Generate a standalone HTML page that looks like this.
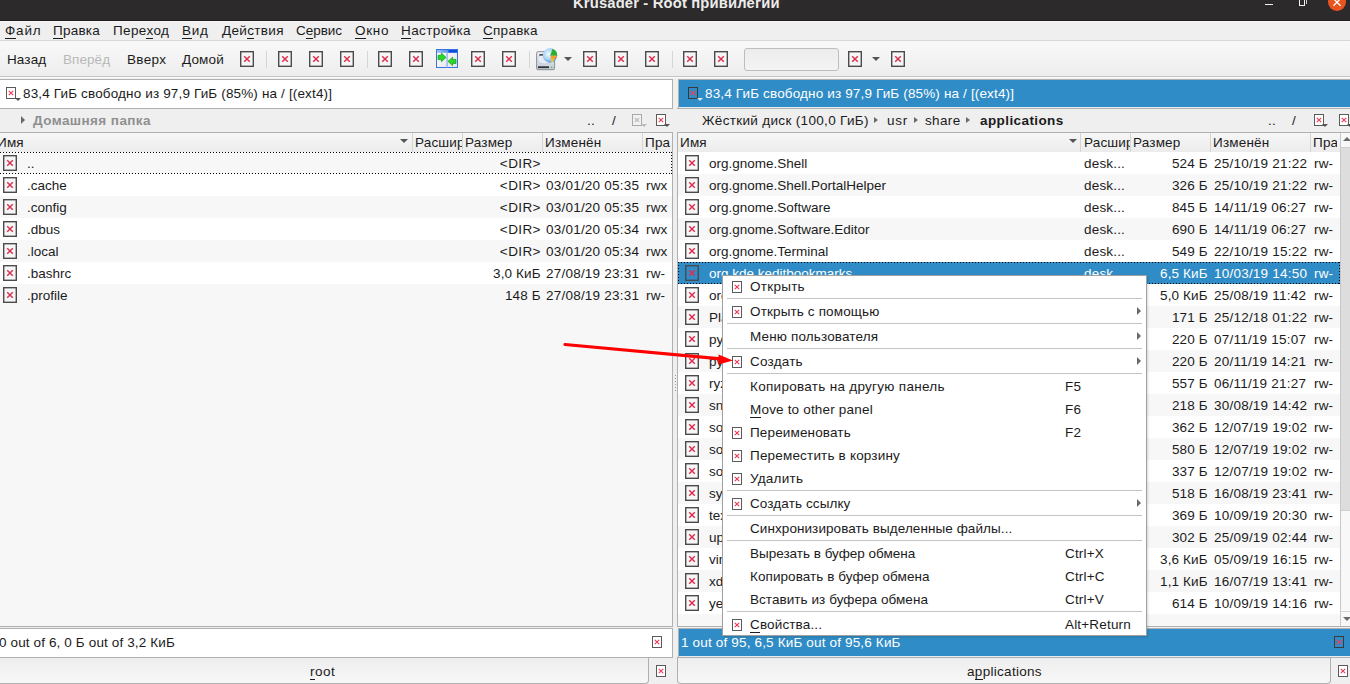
<!DOCTYPE html><html><head><meta charset="utf-8"><style>
*{margin:0;padding:0;box-sizing:border-box}
html,body{width:1350px;height:684px;overflow:hidden;background:#efefef}
body{position:relative;font-family:"Liberation Sans",sans-serif;font-size:13.5px;color:#1b1b1b;letter-spacing:0.18px}
.a{position:absolute}
.t{position:absolute;white-space:nowrap;line-height:16px}
u{text-decoration:none;border-bottom:1px solid currentColor}
svg.i{position:absolute;overflow:visible}
.wt{color:#fff}
</style></head><body>
<svg width="0" height="0" style="position:absolute"><defs>
<symbol id="bx" viewBox="0 0 14 16"><rect x="0.7" y="0.7" width="12.6" height="14.6" fill="#f6f6f6" stroke="#4b4b4b" stroke-width="1.4"/><path d="M4.2 5.2L9.8 10.8M9.8 5.2L4.2 10.8" stroke="#dc3050" stroke-width="1.5"/></symbol>
<symbol id="bxs" viewBox="0 0 14 16"><rect x="0.7" y="0.7" width="12.6" height="14.6" fill="#308cc6" stroke="#4b4b4b" stroke-width="1.4"/><path d="M4.2 5.2L9.8 10.8M9.8 5.2L4.2 10.8" stroke="#dc3050" stroke-width="1.5"/></symbol>
<symbol id="sx" viewBox="0 0 10 12"><rect x="0.5" y="0.5" width="9" height="11" fill="#fff" stroke="#5a5a5a" stroke-width="1"/><path d="M2.8 3.8L7.2 8.2M7.2 3.8L2.8 8.2" stroke="#ef3d5a" stroke-width="1.2"/></symbol>
<symbol id="sxb" viewBox="0 0 10 12"><rect x="0.5" y="0.5" width="9" height="11" fill="#308cc6" stroke="#3a3a3a" stroke-width="1"/><path d="M2.8 3.8L7.2 8.2M7.2 3.8L2.8 8.2" stroke="#ef3d5a" stroke-width="1.2"/></symbol>
<symbol id="sxg" viewBox="0 0 10 12"><rect x="0.5" y="0.5" width="9" height="11" fill="#f2f2f2" stroke="#a8a8a8" stroke-width="1"/><path d="M2.8 3.8L7.2 8.2M7.2 3.8L2.8 8.2" stroke="#b8b8b8" stroke-width="1.2"/></symbol>
</defs></svg>
<div class="a" style="left:0px;top:0px;width:1350px;height:21px;background:#2c2a2a;"></div>
<div class="a" style="left:0px;top:21px;width:1350px;height:1px;background:#f7f7f7;"></div>
<div class="t" style="left:573px;top:-5px;color:#ececec;font-weight:bold;font-size:14.8px;letter-spacing:0.144px">Krusader - Root привилегий</div>
<div class="a" style="left:0px;top:20px;width:1350px;height:1px;background:#1c1c1c;"></div>
<div class="a" style="left:1265px;top:4px;width:8px;height:1.2px;background:#f0f0f0;"></div>
<div class="a" style="left:1299px;top:-2px;width:6px;height:8px;border:1.2px solid #f0f0f0"></div>
<div class="a" style="left:1306px;top:0px;width:1px;height:4px;background:#cfcfcf;"></div>
<div class="a" style="left:1327.8px;top:-7.2px;width:18.5px;height:18.5px;border-radius:50%;background:#e95420"></div>
<svg class="i" style="left:0;top:0" width="1350" height="21"><path d="M1333.4 -1.4L1340.6 5.8M1340.6 -1.4L1333.4 5.8" stroke="#fff" stroke-width="1.3"/></svg>
<div class="t" style="left:5px;top:23px;;letter-spacing:0.8px"><u>Ф</u>айл</div>
<div class="t" style="left:53px;top:23px;;letter-spacing:0.24px"><u>П</u>равка</div>
<div class="t" style="left:113px;top:23px;;letter-spacing:0.383px">Пере<u>х</u>од</div>
<div class="t" style="left:182px;top:23px;;letter-spacing:0.7px"><u>В</u>ид</div>
<div class="t" style="left:222px;top:23px;;letter-spacing:0.343px">Дей<u>с</u>твия</div>
<div class="t" style="left:296px;top:23px;;letter-spacing:-0.04px">С<u>е</u>рвис</div>
<div class="t" style="left:355px;top:23px;;letter-spacing:0.733px"><u>О</u>кно</div>
<div class="t" style="left:401px;top:23px;;letter-spacing:0.388px"><u>Н</u>астройка</div>
<div class="t" style="left:483px;top:23px;;letter-spacing:0.267px"><u>С</u>правка</div>
<div class="a" style="left:0px;top:40px;width:1350px;height:1px;background:#d8d8d8;"></div>
<div class="a" style="left:0px;top:41px;width:1350px;height:35px;background:linear-gradient(#f9f9f9,#ededed);"></div>
<div class="a" style="left:0px;top:76px;width:1350px;height:1px;background:#c4c4c4;"></div>
<div class="a" style="left:0px;top:77px;width:1350px;height:1px;background:#fbfbfb;"></div>
<div class="t" style="left:7px;top:52px;;letter-spacing:0.125px">Назад</div>
<div class="t" style="left:63px;top:52px;color:#b8b8b8;letter-spacing:0.06px">Вперёд</div>
<div class="t" style="left:127px;top:52px;;letter-spacing:0.325px">Вверх</div>
<div class="t" style="left:182px;top:52px;;letter-spacing:0.15px">Домой</div>
<svg class="i" style="left:240px;top:51px" width="14" height="16"><use href="#bx"/></svg>
<svg class="i" style="left:278px;top:51px" width="14" height="16"><use href="#bx"/></svg>
<svg class="i" style="left:309px;top:51px" width="14" height="16"><use href="#bx"/></svg>
<svg class="i" style="left:340px;top:51px" width="14" height="16"><use href="#bx"/></svg>
<svg class="i" style="left:378px;top:51px" width="14" height="16"><use href="#bx"/></svg>
<svg class="i" style="left:409px;top:51px" width="14" height="16"><use href="#bx"/></svg>
<svg class="i" style="left:471px;top:51px" width="14" height="16"><use href="#bx"/></svg>
<svg class="i" style="left:502px;top:51px" width="14" height="16"><use href="#bx"/></svg>
<svg class="i" style="left:583px;top:51px" width="14" height="16"><use href="#bx"/></svg>
<svg class="i" style="left:614px;top:51px" width="14" height="16"><use href="#bx"/></svg>
<svg class="i" style="left:645px;top:51px" width="14" height="16"><use href="#bx"/></svg>
<svg class="i" style="left:683px;top:51px" width="14" height="16"><use href="#bx"/></svg>
<svg class="i" style="left:714px;top:51px" width="14" height="16"><use href="#bx"/></svg>
<svg class="i" style="left:848px;top:51px" width="14" height="16"><use href="#bx"/></svg>
<svg class="i" style="left:891px;top:51px" width="14" height="16"><use href="#bx"/></svg>
<div class="a" style="left:266px;top:51px;width:1px;height:17px;background:#d6d6d6;"></div>
<div class="a" style="left:367px;top:51px;width:1px;height:17px;background:#d6d6d6;"></div>
<div class="a" style="left:529px;top:51px;width:1px;height:17px;background:#d6d6d6;"></div>
<div class="a" style="left:672px;top:51px;width:1px;height:17px;background:#d6d6d6;"></div>
<svg class="i" style="left:436px;top:49px" width="22" height="19" viewBox="0 0 22 19">
<defs><linearGradient id="tb" x1="0" y1="0" x2="1" y2="0"><stop offset="0" stop-color="#9cc0f4"/><stop offset="0.55" stop-color="#5a90e8"/><stop offset="0.6" stop-color="#0a4ee0"/><stop offset="1" stop-color="#0a4ee0"/></linearGradient>
<linearGradient id="rp" x1="0" y1="0" x2="1" y2="1"><stop offset="0" stop-color="#ffffff"/><stop offset="1" stop-color="#e4e4ea"/></linearGradient></defs>
<rect x="0.5" y="0.5" width="21" height="18" fill="url(#rp)" stroke="#3674e0"/>
<rect x="1" y="1" width="20" height="2.8" fill="url(#tb)"/>
<rect x="10.4" y="3.5" width="1.4" height="15" fill="#8fb6ea"/>
<path d="M2 6.2H5.4V4L10 8.4L5.4 12.8V10.6H2Z" fill="#28d828" stroke="#0c9c0c" stroke-width="0.7"/>
<path d="M20 10.4H16.6V8.2L12 12.4L16.6 16.6V14.4H20Z" fill="#28d828" stroke="#0c9c0c" stroke-width="0.7"/>
</svg>
<svg class="i" style="left:532px;top:44px" width="32" height="28" viewBox="0 0 32 28">
<defs><linearGradient id="dg" x1="0" y1="0" x2="0" y2="1"><stop offset="0" stop-color="#eef2f7"/><stop offset="1" stop-color="#c3ccd8"/></linearGradient>
<radialGradient id="gg" cx="0.4" cy="0.4" r="0.65"><stop offset="0" stop-color="#f4faff"/><stop offset="0.55" stop-color="#a8d4f6"/><stop offset="1" stop-color="#4a90d8"/></radialGradient></defs>
<rect x="4.6" y="7.7" width="18" height="18" rx="1.5" fill="url(#dg)" stroke="#80858c" stroke-width="0.9"/>
<ellipse cx="12.5" cy="15" rx="7" ry="5" fill="#e6ecf2" stroke="#b8c2cc" stroke-width="0.6"/>
<rect x="7.3" y="10.2" width="3.8" height="1.4" fill="#2e2e2e"/>
<rect x="6" y="22.3" width="11" height="1.8" fill="#303030"/>
<circle cx="19.7" cy="23.3" r="0.8" fill="#3cb83c"/>
<circle cx="18" cy="11.5" r="7.2" fill="url(#gg)"/>
<path d="M18.2 11.8L20.6 4.7A7.2 7.2 0 0 1 25.2 11.8Z" fill="#2cb02c"/>
<path d="M18.6 11.8H25.6L19.6 18.4Z" fill="#f4a028"/>
<path d="M19 15.5L22.5 15.2L19.6 18.4Z" fill="#f8d030"/>
</svg>
<div class="a" style="left:564px;top:57px;width:0;height:0;border-left:4px solid transparent;border-right:4px solid transparent;border-top:4px solid #555"></div>
<div class="a" style="left:872px;top:57px;width:0;height:0;border-left:4px solid transparent;border-right:4px solid transparent;border-top:4px solid #555"></div>
<div class="a" style="left:744px;top:48px;width:95px;height:23px;border:1px solid #bdbdbd;border-radius:3px;background:linear-gradient(#ececec,#f4f4f4)"></div>
<div class="a" style="left:672px;top:78px;width:6px;height:606px;background:#efefef;"></div>
<div class="a" style="left:-1px;top:79px;width:674px;height:30px;background:#fff;border:1px solid #b0b0b0"></div>
<div class="a" style="left:678px;top:79px;width:673px;height:30px;background:#308cc6;border:1px solid #b0b0b0;border-right:none;box-shadow:inset 0 -1px 0 #e6eef4"></div>
<div class="a" style="left:677px;top:108px;width:673px;height:1px;background:#b0b0b0;"></div>
<svg class="i" style="left:6px;top:87px" width="10" height="12"><use href="#sx"/></svg>
<div class="a" style="left:15px;top:98px;width:0;height:0;border-left:3px solid transparent;border-right:3px solid transparent;border-top:3px solid #555"></div>
<div class="t" style="left:23px;top:86px;letter-spacing:0.15px">83,4 ГиБ свободно из 97,9 ГиБ (85%) на / [(ext4)]</div>
<svg class="i" style="left:688px;top:87px" width="10" height="12"><use href="#sxb"/></svg>
<div class="a" style="left:697px;top:98px;width:0;height:0;border-left:3px solid transparent;border-right:3px solid transparent;border-top:3px solid #d0e4f4"></div>
<div class="t" style="left:705px;top:86px;color:#fff;letter-spacing:0.15px">83,4 ГиБ свободно из 97,9 ГиБ (85%) на / [(ext4)]</div>
<div class="a" style="left:21px;top:116px;width:0;height:0;border-top:4px solid transparent;border-bottom:4px solid transparent;border-left:4px solid #6a6a6a"></div>
<div class="t" style="left:33px;top:113px;font-weight:bold;color:#8f8f8f;letter-spacing:0.415px">Домашняя папка</div>
<div class="t" style="left:587px;top:113px;">..</div>
<div class="t" style="left:612px;top:113px;">/</div>
<svg class="i" style="left:632px;top:114px" width="10" height="12"><use href="#sxg"/></svg>
<div class="a" style="left:641px;top:124px;width:0;height:0;border-left:3px solid transparent;border-right:3px solid transparent;border-top:3px solid #bbb"></div>
<svg class="i" style="left:656px;top:114px" width="10" height="12"><use href="#sx"/></svg>
<div class="a" style="left:664px;top:124px;width:0;height:0;border-left:3px solid transparent;border-right:3px solid transparent;border-top:3px solid #555"></div>
<div class="t" style="left:702px;top:113px;;letter-spacing:0.33px">Жёсткий диск (100,0 ГиБ)</div>
<div class="a" style="left:874px;top:117px;width:0;height:0;border-top:3.5px solid transparent;border-bottom:3.5px solid transparent;border-left:4px solid #6a6a6a"></div>
<div class="a" style="left:914px;top:117px;width:0;height:0;border-top:3.5px solid transparent;border-bottom:3.5px solid transparent;border-left:4px solid #6a6a6a"></div>
<div class="a" style="left:966px;top:117px;width:0;height:0;border-top:3.5px solid transparent;border-bottom:3.5px solid transparent;border-left:4px solid #6a6a6a"></div>
<div class="t" style="left:887px;top:113px;;letter-spacing:0.7px">usr</div>
<div class="t" style="left:925px;top:113px;;letter-spacing:0.35px">share</div>
<div class="t" style="left:980px;top:113px;font-weight:bold;letter-spacing:0.409px">applications</div>
<div class="t" style="left:1268px;top:113px;">..</div>
<div class="t" style="left:1292px;top:113px;">/</div>
<svg class="i" style="left:1314px;top:114px" width="10" height="12"><use href="#sx"/></svg>
<div class="a" style="left:1322px;top:124px;width:0;height:0;border-left:3px solid transparent;border-right:3px solid transparent;border-top:3px solid #555"></div>
<svg class="i" style="left:1339px;top:114px" width="10" height="12"><use href="#sx"/></svg>
<div class="a" style="left:1347px;top:124px;width:0;height:0;border-left:3px solid transparent;border-right:3px solid transparent;border-top:3px solid #555"></div>
<div class="a" style="left:-1px;top:132px;width:674px;height:495px;background:#f7f7f7;border:1px solid #b0b0b0;border-bottom:1px solid #b0b0b0"></div>
<div class="a" style="left:-1px;top:132px;width:673px;height:20px;background:linear-gradient(#f6f6f6,#ececec);border-top:1px solid #b0b0b0"></div>
<div class="t" style="left:-3px;top:135px;width:40px;overflow:hidden">Имя</div>
<div class="a" style="left:412px;top:133px;width:1px;height:19px;background:#d4d4d4;"></div>
<div class="t" style="left:415px;top:135px;width:47px;overflow:hidden">Расшир</div>
<div class="a" style="left:462px;top:133px;width:1px;height:19px;background:#d4d4d4;"></div>
<div class="t" style="left:465px;top:135px;width:77px;overflow:hidden">Размер</div>
<div class="a" style="left:542px;top:133px;width:1px;height:19px;background:#d4d4d4;"></div>
<div class="t" style="left:545px;top:135px;width:97px;overflow:hidden">Изменён</div>
<div class="a" style="left:642px;top:133px;width:1px;height:19px;background:#d4d4d4;"></div>
<div class="t" style="left:645px;top:135px;width:26px;overflow:hidden">Пра</div>
<div class="a" style="left:400px;top:139px;width:0;height:0;border-left:4px solid transparent;border-right:4px solid transparent;border-top:4px solid #555"></div>
<div class="a" style="left:0px;top:152px;width:672px;height:22px;background:#f7f7f7;"></div>
<svg class="i" style="left:3px;top:155px" width="14" height="16"><use href="#bx"/></svg>
<div class="t" style="left:27px;top:156px;letter-spacing:0">..</div>
<div class="t" style="left:400px;top:156px;width:140.9px;text-align:right;letter-spacing:0.4px">&lt;DIR&gt;</div>
<div class="t" style="left:546px;top:156px;letter-spacing:0.22px"></div>
<div class="t" style="left:646px;top:156px;"></div>
<div class="a" style="left:0px;top:174px;width:672px;height:22px;background:#fff;"></div>
<svg class="i" style="left:3px;top:177px" width="14" height="16"><use href="#bx"/></svg>
<div class="t" style="left:27px;top:178px;letter-spacing:0">.cache</div>
<div class="t" style="left:400px;top:178px;width:140.9px;text-align:right;letter-spacing:0.4px">&lt;DIR&gt;</div>
<div class="t" style="left:546px;top:178px;letter-spacing:0.22px">03/01/20 05:35</div>
<div class="t" style="left:646px;top:178px;">rwx</div>
<div class="a" style="left:0px;top:196px;width:672px;height:22px;background:#f7f7f7;"></div>
<svg class="i" style="left:3px;top:199px" width="14" height="16"><use href="#bx"/></svg>
<div class="t" style="left:27px;top:200px;letter-spacing:0">.config</div>
<div class="t" style="left:400px;top:200px;width:140.9px;text-align:right;letter-spacing:0.4px">&lt;DIR&gt;</div>
<div class="t" style="left:546px;top:200px;letter-spacing:0.22px">03/01/20 05:35</div>
<div class="t" style="left:646px;top:200px;">rwx</div>
<div class="a" style="left:0px;top:218px;width:672px;height:22px;background:#fff;"></div>
<svg class="i" style="left:3px;top:221px" width="14" height="16"><use href="#bx"/></svg>
<div class="t" style="left:27px;top:222px;letter-spacing:0">.dbus</div>
<div class="t" style="left:400px;top:222px;width:140.9px;text-align:right;letter-spacing:0.4px">&lt;DIR&gt;</div>
<div class="t" style="left:546px;top:222px;letter-spacing:0.22px">03/01/20 05:34</div>
<div class="t" style="left:646px;top:222px;">rwx</div>
<div class="a" style="left:0px;top:240px;width:672px;height:22px;background:#f7f7f7;"></div>
<svg class="i" style="left:3px;top:243px" width="14" height="16"><use href="#bx"/></svg>
<div class="t" style="left:27px;top:244px;letter-spacing:0">.local</div>
<div class="t" style="left:400px;top:244px;width:140.9px;text-align:right;letter-spacing:0.4px">&lt;DIR&gt;</div>
<div class="t" style="left:546px;top:244px;letter-spacing:0.22px">03/01/20 05:34</div>
<div class="t" style="left:646px;top:244px;">rwx</div>
<div class="a" style="left:0px;top:262px;width:672px;height:22px;background:#fff;"></div>
<svg class="i" style="left:3px;top:265px" width="14" height="16"><use href="#bx"/></svg>
<div class="t" style="left:27px;top:266px;letter-spacing:0">.bashrc</div>
<div class="t" style="left:400px;top:266px;width:140.6px;text-align:right;letter-spacing:0.1px">3,0 КиБ</div>
<div class="t" style="left:546px;top:266px;letter-spacing:0.22px">27/08/19 23:31</div>
<div class="t" style="left:646px;top:266px;">rw-</div>
<div class="a" style="left:0px;top:284px;width:672px;height:22px;background:#f7f7f7;"></div>
<svg class="i" style="left:3px;top:287px" width="14" height="16"><use href="#bx"/></svg>
<div class="t" style="left:27px;top:288px;letter-spacing:0">.profile</div>
<div class="t" style="left:400px;top:288px;width:140.6px;text-align:right;letter-spacing:0.1px">148 Б</div>
<div class="t" style="left:546px;top:288px;letter-spacing:0.22px">27/08/19 23:31</div>
<div class="t" style="left:646px;top:288px;">rw-</div>
<div class="a" style="left:0px;top:152px;width:672px;height:1px;background:repeating-linear-gradient(90deg,#000 0 1px,transparent 1px 3px)"></div>
<div class="a" style="left:0px;top:173px;width:672px;height:1px;background:repeating-linear-gradient(90deg,#000 0 1px,transparent 1px 3px)"></div>
<div class="a" style="left:671px;top:152px;width:1px;height:22px;background:repeating-linear-gradient(180deg,#000 0 1px,transparent 1px 3px)"></div>
<div class="a" style="left:677px;top:132px;width:674px;height:495px;background:#fff;border:1px solid #b0b0b0"></div>
<div class="a" style="left:678px;top:132px;width:662px;height:20px;background:linear-gradient(#f6f6f6,#ececec);border-top:1px solid #b0b0b0"></div>
<div class="t" style="left:680px;top:135px;width:40px;overflow:hidden">Имя</div>
<div class="a" style="left:1080px;top:133px;width:1px;height:19px;background:#d4d4d4;"></div>
<div class="t" style="left:1084px;top:135px;width:46px;overflow:hidden">Расшир</div>
<div class="a" style="left:1130px;top:133px;width:1px;height:19px;background:#d4d4d4;"></div>
<div class="t" style="left:1133px;top:135px;width:77px;overflow:hidden">Размер</div>
<div class="a" style="left:1210px;top:133px;width:1px;height:19px;background:#d4d4d4;"></div>
<div class="t" style="left:1213px;top:135px;width:97px;overflow:hidden">Изменён</div>
<div class="a" style="left:1310px;top:133px;width:1px;height:19px;background:#d4d4d4;"></div>
<div class="t" style="left:1313px;top:135px;width:24px;overflow:hidden">Пра</div>
<div class="a" style="left:1069px;top:139px;width:0;height:0;border-left:4px solid transparent;border-right:4px solid transparent;border-top:4px solid #555"></div>
<div class="a" style="left:678px;top:152px;width:662px;height:474px;background:#fff;"></div>
<div class="a" style="left:678px;top:152px;width:662px;height:22px;background:#fff;"></div>
<svg class="i" style="left:685px;top:155px" width="14" height="16"><use href="#bx"/></svg>
<div class="t" style="left:709px;top:156px;letter-spacing:0">org.gnome.Shell</div>
<div class="t" style="left:1084px;top:156px;">desk...</div>
<div class="t" style="left:1100px;top:156px;width:107.6px;text-align:right;letter-spacing:0.1px">524 Б</div>
<div class="t" style="left:1214px;top:156px;letter-spacing:0.22px">25/10/19 21:22</div>
<div class="t" style="left:1314px;top:156px;">rw-</div>
<div class="a" style="left:678px;top:174px;width:662px;height:22px;background:#f7f7f7;"></div>
<svg class="i" style="left:685px;top:177px" width="14" height="16"><use href="#bx"/></svg>
<div class="t" style="left:709px;top:178px;letter-spacing:0">org.gnome.Shell.PortalHelper</div>
<div class="t" style="left:1084px;top:178px;">desk...</div>
<div class="t" style="left:1100px;top:178px;width:107.6px;text-align:right;letter-spacing:0.1px">326 Б</div>
<div class="t" style="left:1214px;top:178px;letter-spacing:0.22px">25/10/19 21:22</div>
<div class="t" style="left:1314px;top:178px;">rw-</div>
<div class="a" style="left:678px;top:196px;width:662px;height:22px;background:#fff;"></div>
<svg class="i" style="left:685px;top:199px" width="14" height="16"><use href="#bx"/></svg>
<div class="t" style="left:709px;top:200px;letter-spacing:0">org.gnome.Software</div>
<div class="t" style="left:1084px;top:200px;">desk...</div>
<div class="t" style="left:1100px;top:200px;width:107.6px;text-align:right;letter-spacing:0.1px">845 Б</div>
<div class="t" style="left:1214px;top:200px;letter-spacing:0.22px">14/11/19 06:27</div>
<div class="t" style="left:1314px;top:200px;">rw-</div>
<div class="a" style="left:678px;top:218px;width:662px;height:22px;background:#f7f7f7;"></div>
<svg class="i" style="left:685px;top:221px" width="14" height="16"><use href="#bx"/></svg>
<div class="t" style="left:709px;top:222px;letter-spacing:0">org.gnome.Software.Editor</div>
<div class="t" style="left:1084px;top:222px;">desk...</div>
<div class="t" style="left:1100px;top:222px;width:107.6px;text-align:right;letter-spacing:0.1px">690 Б</div>
<div class="t" style="left:1214px;top:222px;letter-spacing:0.22px">14/11/19 06:27</div>
<div class="t" style="left:1314px;top:222px;">rw-</div>
<div class="a" style="left:678px;top:240px;width:662px;height:22px;background:#fff;"></div>
<svg class="i" style="left:685px;top:243px" width="14" height="16"><use href="#bx"/></svg>
<div class="t" style="left:709px;top:244px;letter-spacing:0">org.gnome.Terminal</div>
<div class="t" style="left:1084px;top:244px;">desk...</div>
<div class="t" style="left:1100px;top:244px;width:107.6px;text-align:right;letter-spacing:0.1px">549 Б</div>
<div class="t" style="left:1214px;top:244px;letter-spacing:0.22px">22/10/19 15:22</div>
<div class="t" style="left:1314px;top:244px;">rw-</div>
<div class="a" style="left:678px;top:262px;width:662px;height:22px;background:#308cc6;"></div>
<svg class="i" style="left:685px;top:265px" width="14" height="16"><use href="#bxs"/></svg>
<div class="t" style="left:709px;top:266px;color:#fff;letter-spacing:0">org.kde.keditbookmarks</div>
<div class="t" style="left:1084px;top:266px;color:#fff;">desk...</div>
<div class="t" style="left:1100px;top:266px;color:#fff;width:107.6px;text-align:right;letter-spacing:0.1px">6,5 КиБ</div>
<div class="t" style="left:1214px;top:266px;color:#fff;letter-spacing:0.22px">10/03/19 14:50</div>
<div class="t" style="left:1314px;top:266px;color:#fff;">rw-</div>
<div class="a" style="left:678px;top:284px;width:662px;height:22px;background:#fff;"></div>
<svg class="i" style="left:685px;top:287px" width="14" height="16"><use href="#bx"/></svg>
<div class="t" style="left:709px;top:288px;letter-spacing:0">org.kde.krusader</div>
<div class="t" style="left:1084px;top:288px;">desk...</div>
<div class="t" style="left:1100px;top:288px;width:107.6px;text-align:right;letter-spacing:0.1px">5,0 КиБ</div>
<div class="t" style="left:1214px;top:288px;letter-spacing:0.22px">25/08/19 11:42</div>
<div class="t" style="left:1314px;top:288px;">rw-</div>
<div class="a" style="left:678px;top:306px;width:662px;height:22px;background:#f7f7f7;"></div>
<svg class="i" style="left:685px;top:309px" width="14" height="16"><use href="#bx"/></svg>
<div class="t" style="left:709px;top:310px;letter-spacing:0">PlayOnLinux</div>
<div class="t" style="left:1084px;top:310px;">desk...</div>
<div class="t" style="left:1100px;top:310px;width:107.6px;text-align:right;letter-spacing:0.1px">171 Б</div>
<div class="t" style="left:1214px;top:310px;letter-spacing:0.22px">25/12/18 01:22</div>
<div class="t" style="left:1314px;top:310px;">rw-</div>
<div class="a" style="left:678px;top:328px;width:662px;height:22px;background:#fff;"></div>
<svg class="i" style="left:685px;top:331px" width="14" height="16"><use href="#bx"/></svg>
<div class="t" style="left:709px;top:332px;letter-spacing:0">python3.7</div>
<div class="t" style="left:1084px;top:332px;">desk...</div>
<div class="t" style="left:1100px;top:332px;width:107.6px;text-align:right;letter-spacing:0.1px">220 Б</div>
<div class="t" style="left:1214px;top:332px;letter-spacing:0.22px">07/11/19 15:07</div>
<div class="t" style="left:1314px;top:332px;">rw-</div>
<div class="a" style="left:678px;top:350px;width:662px;height:22px;background:#f7f7f7;"></div>
<svg class="i" style="left:685px;top:353px" width="14" height="16"><use href="#bx"/></svg>
<div class="t" style="left:709px;top:354px;letter-spacing:0">python3.8</div>
<div class="t" style="left:1084px;top:354px;">desk...</div>
<div class="t" style="left:1100px;top:354px;width:107.6px;text-align:right;letter-spacing:0.1px">220 Б</div>
<div class="t" style="left:1214px;top:354px;letter-spacing:0.22px">20/11/19 14:21</div>
<div class="t" style="left:1314px;top:354px;">rw-</div>
<div class="a" style="left:678px;top:372px;width:662px;height:22px;background:#fff;"></div>
<svg class="i" style="left:685px;top:375px" width="14" height="16"><use href="#bx"/></svg>
<div class="t" style="left:709px;top:376px;letter-spacing:0">ryzenadj</div>
<div class="t" style="left:1084px;top:376px;">desk...</div>
<div class="t" style="left:1100px;top:376px;width:107.6px;text-align:right;letter-spacing:0.1px">557 Б</div>
<div class="t" style="left:1214px;top:376px;letter-spacing:0.22px">06/11/19 21:27</div>
<div class="t" style="left:1314px;top:376px;">rw-</div>
<div class="a" style="left:678px;top:394px;width:662px;height:22px;background:#f7f7f7;"></div>
<svg class="i" style="left:685px;top:397px" width="14" height="16"><use href="#bx"/></svg>
<div class="t" style="left:709px;top:398px;letter-spacing:0">snap-handle-link</div>
<div class="t" style="left:1084px;top:398px;">desk...</div>
<div class="t" style="left:1100px;top:398px;width:107.6px;text-align:right;letter-spacing:0.1px">218 Б</div>
<div class="t" style="left:1214px;top:398px;letter-spacing:0.22px">30/08/19 14:42</div>
<div class="t" style="left:1314px;top:398px;">rw-</div>
<div class="a" style="left:678px;top:416px;width:662px;height:22px;background:#fff;"></div>
<svg class="i" style="left:685px;top:419px" width="14" height="16"><use href="#bx"/></svg>
<div class="t" style="left:709px;top:420px;letter-spacing:0">software-properties-drivers</div>
<div class="t" style="left:1084px;top:420px;">desk...</div>
<div class="t" style="left:1100px;top:420px;width:107.6px;text-align:right;letter-spacing:0.1px">362 Б</div>
<div class="t" style="left:1214px;top:420px;letter-spacing:0.22px">12/07/19 19:02</div>
<div class="t" style="left:1314px;top:420px;">rw-</div>
<div class="a" style="left:678px;top:438px;width:662px;height:22px;background:#f7f7f7;"></div>
<svg class="i" style="left:685px;top:441px" width="14" height="16"><use href="#bx"/></svg>
<div class="t" style="left:709px;top:442px;letter-spacing:0">software-properties-gtk</div>
<div class="t" style="left:1084px;top:442px;">desk...</div>
<div class="t" style="left:1100px;top:442px;width:107.6px;text-align:right;letter-spacing:0.1px">580 Б</div>
<div class="t" style="left:1214px;top:442px;letter-spacing:0.22px">12/07/19 19:02</div>
<div class="t" style="left:1314px;top:442px;">rw-</div>
<div class="a" style="left:678px;top:460px;width:662px;height:22px;background:#fff;"></div>
<svg class="i" style="left:685px;top:463px" width="14" height="16"><use href="#bx"/></svg>
<div class="t" style="left:709px;top:464px;letter-spacing:0">software-properties-livepatch</div>
<div class="t" style="left:1084px;top:464px;">desk...</div>
<div class="t" style="left:1100px;top:464px;width:107.6px;text-align:right;letter-spacing:0.1px">337 Б</div>
<div class="t" style="left:1214px;top:464px;letter-spacing:0.22px">12/07/19 19:02</div>
<div class="t" style="left:1314px;top:464px;">rw-</div>
<div class="a" style="left:678px;top:482px;width:662px;height:22px;background:#f7f7f7;"></div>
<svg class="i" style="left:685px;top:485px" width="14" height="16"><use href="#bx"/></svg>
<div class="t" style="left:709px;top:486px;letter-spacing:0">system-config-printer</div>
<div class="t" style="left:1084px;top:486px;">desk...</div>
<div class="t" style="left:1100px;top:486px;width:107.6px;text-align:right;letter-spacing:0.1px">518 Б</div>
<div class="t" style="left:1214px;top:486px;letter-spacing:0.22px">16/08/19 23:41</div>
<div class="t" style="left:1314px;top:486px;">rw-</div>
<div class="a" style="left:678px;top:504px;width:662px;height:22px;background:#fff;"></div>
<svg class="i" style="left:685px;top:507px" width="14" height="16"><use href="#bx"/></svg>
<div class="t" style="left:709px;top:508px;letter-spacing:0">texdoctk</div>
<div class="t" style="left:1084px;top:508px;">desk...</div>
<div class="t" style="left:1100px;top:508px;width:107.6px;text-align:right;letter-spacing:0.1px">369 Б</div>
<div class="t" style="left:1214px;top:508px;letter-spacing:0.22px">10/09/19 20:30</div>
<div class="t" style="left:1314px;top:508px;">rw-</div>
<div class="a" style="left:678px;top:526px;width:662px;height:22px;background:#f7f7f7;"></div>
<svg class="i" style="left:685px;top:529px" width="14" height="16"><use href="#bx"/></svg>
<div class="t" style="left:709px;top:530px;letter-spacing:0">update-manager</div>
<div class="t" style="left:1084px;top:530px;">desk...</div>
<div class="t" style="left:1100px;top:530px;width:107.6px;text-align:right;letter-spacing:0.1px">302 Б</div>
<div class="t" style="left:1214px;top:530px;letter-spacing:0.22px">25/09/19 02:44</div>
<div class="t" style="left:1314px;top:530px;">rw-</div>
<div class="a" style="left:678px;top:548px;width:662px;height:22px;background:#fff;"></div>
<svg class="i" style="left:685px;top:551px" width="14" height="16"><use href="#bx"/></svg>
<div class="t" style="left:709px;top:552px;letter-spacing:0">vim</div>
<div class="t" style="left:1084px;top:552px;">desk...</div>
<div class="t" style="left:1100px;top:552px;width:107.6px;text-align:right;letter-spacing:0.1px">3,6 КиБ</div>
<div class="t" style="left:1214px;top:552px;letter-spacing:0.22px">05/09/19 16:15</div>
<div class="t" style="left:1314px;top:552px;">rw-</div>
<div class="a" style="left:678px;top:570px;width:662px;height:22px;background:#f7f7f7;"></div>
<svg class="i" style="left:685px;top:573px" width="14" height="16"><use href="#bx"/></svg>
<div class="t" style="left:709px;top:574px;letter-spacing:0">xdg-desktop-portal</div>
<div class="t" style="left:1084px;top:574px;">desk...</div>
<div class="t" style="left:1100px;top:574px;width:107.6px;text-align:right;letter-spacing:0.1px">1,1 КиБ</div>
<div class="t" style="left:1214px;top:574px;letter-spacing:0.22px">16/07/19 13:41</div>
<div class="t" style="left:1314px;top:574px;">rw-</div>
<div class="a" style="left:678px;top:592px;width:662px;height:22px;background:#fff;"></div>
<svg class="i" style="left:685px;top:595px" width="14" height="16"><use href="#bx"/></svg>
<div class="t" style="left:709px;top:596px;letter-spacing:0">yelp</div>
<div class="t" style="left:1084px;top:596px;">desk...</div>
<div class="t" style="left:1100px;top:596px;width:107.6px;text-align:right;letter-spacing:0.1px">614 Б</div>
<div class="t" style="left:1214px;top:596px;letter-spacing:0.22px">10/09/19 14:16</div>
<div class="t" style="left:1314px;top:596px;">rw-</div>
<div class="a" style="left:678px;top:614px;width:662px;height:12px;background:#f7f7f7;"></div>
<div class="a" style="left:678px;top:262px;width:662px;height:1px;background:repeating-linear-gradient(90deg,#000 0 1px,transparent 1px 3px)"></div>
<div class="a" style="left:678px;top:283px;width:662px;height:1px;background:repeating-linear-gradient(90deg,#000 0 1px,transparent 1px 3px)"></div>
<div class="a" style="left:678px;top:262px;width:1px;height:22px;background:repeating-linear-gradient(180deg,#000 0 1px,transparent 1px 3px)"></div>
<div class="a" style="left:1339px;top:262px;width:1px;height:22px;background:repeating-linear-gradient(180deg,#000 0 1px,transparent 1px 3px)"></div>
<div class="a" style="left:1340px;top:133px;width:10px;height:493px;background:#f8f8f8;border-left:1px solid #c8c8c8"></div>
<div class="a" style="left:1341px;top:611px;width:9px;height:1px;background:#d4d4d4;"></div>
<div class="a" style="left:1341px;top:147px;width:9px;height:364px;background:#dddddd;border-top:1px solid #cfcfcf;border-bottom:1px solid #cfcfcf"></div>
<div class="a" style="left:1342.5px;top:137px;width:0;height:0;border-left:4.5px solid transparent;border-right:4.5px solid transparent;border-bottom:4.5px solid #6a6a6a"></div>
<div class="a" style="left:1342.5px;top:617px;width:0;height:0;border-left:4.5px solid transparent;border-right:4.5px solid transparent;border-top:4.5px solid #6a6a6a"></div>
<div class="a" style="left:-1px;top:657px;width:650px;height:27px;background:linear-gradient(#ededed,#f8f8f8);border:1px solid #b0b0b0;border-top:none;border-bottom-right-radius:4px"></div>
<div class="t" style="left:310px;top:664px;;letter-spacing:0.533px"><u>r</u>oot</div>
<svg class="i" style="left:656px;top:665px" width="10" height="12"><use href="#sx"/></svg>
<div class="a" style="left:677px;top:657px;width:654px;height:27px;background:linear-gradient(#ededed,#f8f8f8);border:1px solid #b0b0b0;border-top:none;border-bottom-left-radius:4px;border-bottom-right-radius:4px"></div>
<div class="t" style="left:967px;top:664px;;letter-spacing:0.3px">a<u>p</u>plications</div>
<svg class="i" style="left:1338px;top:665px" width="10" height="12"><use href="#sx"/></svg>
<div class="a" style="left:-1px;top:628px;width:674px;height:30px;background:#fff;border:1px solid #b0b0b0"></div>
<div class="t" style="left:-1px;top:635px;;letter-spacing:0.13px">0 out of 6, 0 Б out of 3,2 КиБ</div>
<svg class="i" style="left:652px;top:636px" width="10" height="12"><use href="#sx"/></svg>
<div class="a" style="left:678px;top:628px;width:673px;height:30px;background:#308cc6;border:1px solid #b0b0b0;border-right:none;box-shadow:inset 0 -1px 0 #e6eef4"></div>
<div class="a" style="left:677px;top:657px;width:673px;height:1px;background:#b0b0b0;"></div>
<div class="t" style="left:681px;top:635px;color:#fff;letter-spacing:0.166px">1 out of 95, 6,5 КиБ out of 95,6 КиБ</div>
<svg class="i" style="left:1334px;top:636px" width="10" height="12"><use href="#sxb"/></svg>
<div class="a" style="left:722px;top:275px;width:425px;height:361px;background:#fff;border:1px solid #a0a0a0;box-shadow:1px 1px 2px rgba(0,0,0,0.15)"></div>
<svg class="i" style="left:732px;top:281px" width="10" height="12"><use href="#sx"/></svg>
<div class="t" style="left:750px;top:279px;letter-spacing:0.267px">Открыть</div>
<div class="a" style="left:727px;top:298px;width:415px;height:1px;background:#c4c4c4;"></div>
<svg class="i" style="left:732px;top:306px" width="10" height="12"><use href="#sx"/></svg>
<div class="t" style="left:750px;top:304px;letter-spacing:0.138px">Открыть с помощью</div>
<div class="a" style="left:1137px;top:307px;width:0;height:0;border-top:4px solid transparent;border-bottom:4px solid transparent;border-left:4px solid #6a6a6a"></div>
<div class="a" style="left:727px;top:323px;width:415px;height:1px;background:#c4c4c4;"></div>
<div class="t" style="left:750px;top:329px;letter-spacing:0.144px">Меню пользователя</div>
<div class="a" style="left:1137px;top:332px;width:0;height:0;border-top:4px solid transparent;border-bottom:4px solid transparent;border-left:4px solid #6a6a6a"></div>
<div class="a" style="left:727px;top:348px;width:415px;height:1px;background:#c4c4c4;"></div>
<svg class="i" style="left:732px;top:356px" width="10" height="12"><use href="#sx"/></svg>
<div class="t" style="left:750px;top:354px;letter-spacing:0.217px">Создать</div>
<div class="a" style="left:1137px;top:357px;width:0;height:0;border-top:4px solid transparent;border-bottom:4px solid transparent;border-left:4px solid #6a6a6a"></div>
<div class="a" style="left:727px;top:373px;width:415px;height:1px;background:#c4c4c4;"></div>
<div class="t" style="left:750px;top:379px;letter-spacing:0.292px">Копировать на другую панель</div>
<div class="t" style="left:1065px;top:379px;">F5</div>
<div class="t" style="left:750px;top:402px;letter-spacing:0.183px"><u>M</u>ove to other panel</div>
<div class="t" style="left:1065px;top:402px;">F6</div>
<svg class="i" style="left:732px;top:427px" width="10" height="12"><use href="#sx"/></svg>
<div class="t" style="left:750px;top:425px;letter-spacing:0.142px">Переименовать</div>
<div class="t" style="left:1065px;top:425px;">F2</div>
<svg class="i" style="left:732px;top:450px" width="10" height="12"><use href="#sx"/></svg>
<div class="t" style="left:750px;top:448px;letter-spacing:0.18px">Переместить в корзину</div>
<svg class="i" style="left:732px;top:473px" width="10" height="12"><use href="#sx"/></svg>
<div class="t" style="left:750px;top:471px;letter-spacing:0.233px">Удалить</div>
<div class="a" style="left:727px;top:490px;width:415px;height:1px;background:#c4c4c4;"></div>
<svg class="i" style="left:732px;top:498px" width="10" height="12"><use href="#sx"/></svg>
<div class="t" style="left:750px;top:496px;letter-spacing:0.108px">Создать ссылку</div>
<div class="a" style="left:1137px;top:499px;width:0;height:0;border-top:4px solid transparent;border-bottom:4px solid transparent;border-left:4px solid #6a6a6a"></div>
<div class="a" style="left:727px;top:515px;width:415px;height:1px;background:#c4c4c4;"></div>
<div class="t" style="left:750px;top:521px;letter-spacing:0.077px">Синхронизировать выделенные файлы...</div>
<div class="a" style="left:727px;top:540px;width:415px;height:1px;background:#c4c4c4;"></div>
<div class="t" style="left:750px;top:546px;letter-spacing:-0.005px">Вырезать в буфер обмена</div>
<div class="t" style="left:1065px;top:546px;">Ctrl+X</div>
<div class="t" style="left:750px;top:569px;letter-spacing:0.067px">Копировать в буфер обмена</div>
<div class="t" style="left:1065px;top:569px;">Ctrl+C</div>
<div class="t" style="left:750px;top:592px;letter-spacing:0.058px">Вставить из буфера обмена</div>
<div class="t" style="left:1065px;top:592px;">Ctrl+V</div>
<div class="a" style="left:727px;top:611px;width:415px;height:1px;background:#c4c4c4;"></div>
<svg class="i" style="left:732px;top:619px" width="10" height="12"><use href="#sx"/></svg>
<div class="t" style="left:750px;top:617px;letter-spacing:0.14px"><u>С</u>войства...</div>
<div class="t" style="left:1065px;top:617px;">Alt+Return</div>
<div class="a" style="left:675px;top:375px;width:1px;height:1px;background:#9a9a9a;"></div>
<div class="a" style="left:675px;top:378px;width:1px;height:1px;background:#9a9a9a;"></div>
<div class="a" style="left:675px;top:381px;width:1px;height:1px;background:#9a9a9a;"></div>
<div class="a" style="left:675px;top:384px;width:1px;height:1px;background:#9a9a9a;"></div>
<div class="a" style="left:675px;top:387px;width:1px;height:1px;background:#9a9a9a;"></div>
<div class="a" style="left:675px;top:390px;width:1px;height:1px;background:#9a9a9a;"></div>
<svg class="i" style="left:0;top:0" width="1350" height="684"><line x1="565" y1="344.5" x2="721" y2="358.8" stroke="#ff0000" stroke-width="3.2" stroke-linecap="round"/>
<path d="M733 360.5L718.5 354.5L718.5 364.5z" fill="#ff0000"/></svg>
</body></html>
